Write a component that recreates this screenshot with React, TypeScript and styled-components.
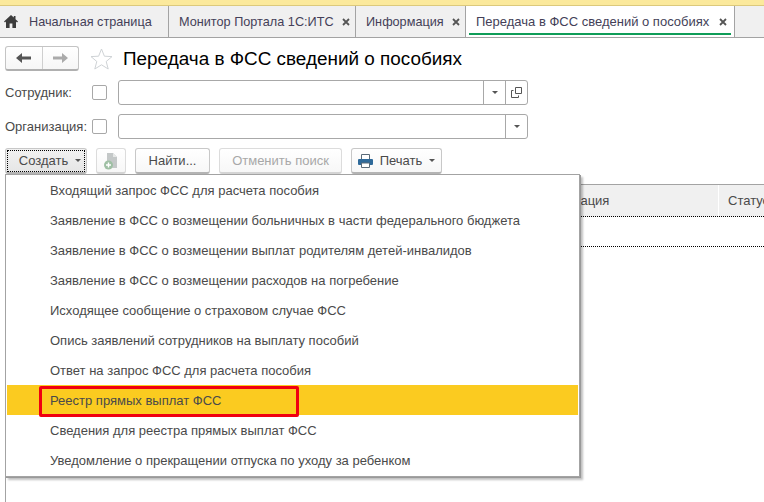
import React from 'react';
import styled, { createGlobalStyle } from 'styled-components';

const GlobalStyle = createGlobalStyle`
  html, body {
    margin: 0;
    padding: 0;
    background: #fff;
  }
  body {
    font-family: "Liberation Sans", Arial, sans-serif;
    font-size: 12px;
    color: #4a4a4a;
  }
`;

const Page = styled.div`
  width: 764px;
  height: 502px;
  display: flex;
  flex-direction: column;
  overflow: hidden;
`;

const TopStrip = styled.div`
  height: 5px;
  background: #fbe99c;
  border-bottom: 1px solid #dcc97c;
`;

const TabBar = styled.div`
  height: 31px;
  display: flex;
  background: #f0f0f0;
  border-bottom: 1px solid #a3a3a3;
`;

const Tab = styled.div<{ $width: number; $active?: boolean; $home?: boolean }>`
  position: relative;
  box-sizing: border-box;
  width: ${({ $width }) => $width}px;
  display: flex;
  align-items: center;
  gap: ${({ $home }) => ($home ? 11 : 8)}px;
  padding-left: ${({ $home }) => ($home ? 4 : 10)}px;
  border-right: 1px solid #a3a3a3;
  background: ${({ $active }) => ($active ? '#fff' : 'transparent')};
  color: #443f58;
  font-size: ${({ $active }) => ($active ? 13 : 12.7)}px;
  white-space: nowrap;

  ${({ $active }) =>
    $active &&
    `
    &::after {
      content: '';
      position: absolute;
      left: 3px;
      right: 3px;
      bottom: 2px;
      height: 2px;
      background: #0f9d58;
    }
  `}
`;

const Close = styled.span`
  margin-left: auto;
  margin-right: 7px;
  display: flex;
`;

const Content = styled.div`
  flex: 1;
  display: flex;
  flex-direction: column;
  padding: 8px 0 0 5px;
`;

const Header = styled.div`
  display: flex;
  align-items: center;
  height: 25px;
`;

const NavGroup = styled.div`
  box-sizing: border-box;
  width: 74px;
  height: 25px;
  display: flex;
  border: 1px solid #c4c4c4;
  border-bottom: 2px solid #b0b0b0;
  border-radius: 3px;
  background: linear-gradient(#fff, #f6f6f6);
`;

const NavButton = styled.div<{ $divided?: boolean }>`
  flex: 1;
  display: flex;
  align-items: center;
  justify-content: center;
  border-right: ${({ $divided }) => ($divided ? '1px solid #cfcfcf' : 'none')};
`;

const StarWrap = styled.div`
  margin-left: 11px;
  display: flex;
`;

const Title = styled.h1`
  margin: 0 0 0 10px;
  font-size: 18.9px;
  font-weight: 400;
  color: #000;
`;

const FieldRow = styled.div`
  display: flex;
  align-items: center;
  height: 25px;
  margin-top: 9px;
`;

const FieldLabel = styled.label`
  width: 87px;
  font-size: 13px;
  color: #4a4a4a;
  white-space: nowrap;
`;

const Check = styled.span`
  box-sizing: border-box;
  width: 15px;
  height: 15px;
  border: 1px solid #a8a8a8;
  border-radius: 2px;
  background: #fff;
`;

const Field = styled.div`
  box-sizing: border-box;
  margin-left: 11px;
  width: 410px;
  height: 25px;
  display: flex;
  justify-content: flex-end;
  border: 1px solid #a8a8a8;
  border-radius: 3px;
`;

const FieldButton = styled.div`
  width: 21px;
  display: flex;
  align-items: center;
  justify-content: center;
  border-left: 1px solid #a8a8a8;
`;

const Caret = styled.span<{ $color?: string }>`
  width: 0;
  height: 0;
  border-left: 3px solid transparent;
  border-right: 3px solid transparent;
  border-top: 3px solid ${({ $color }) => $color ?? '#555'};
`;

const Toolbar = styled.div`
  display: flex;
  margin-top: 9px;
  gap: 9px;
  height: 26px;
`;

const ToolButton = styled.div<{ $width: number; $disabled?: boolean; $focused?: boolean }>`
  position: relative;
  box-sizing: border-box;
  width: ${({ $width }) => $width}px;
  height: 26px;
  display: flex;
  align-items: center;
  justify-content: center;
  gap: 7px;
  padding-left: ${({ $focused }) => ($focused ? 8 : 0)}px;
  border: 1px solid ${({ $disabled }) => ($disabled ? '#dcdcdc' : '#c8c8c8')};
  border-bottom: 2px solid ${({ $disabled }) => ($disabled ? '#d4d4d4' : '#b4b4b4')};
  border-radius: 3px;
  background: ${({ $focused }) => ($focused ? 'linear-gradient(#f1f1f1, #e6e6e6)' : 'linear-gradient(#fff, #f7f7f7)')};
  color: ${({ $disabled }) => ($disabled ? '#a8a8a8' : '#4a4a4a')};
  font-size: 13px;

  ${({ $focused }) =>
    $focused &&
    `
    &::after {
      content: '';
      position: absolute;
      inset: 1px 1px 0;
      border: 1px dotted #000;
    }
  `}
`;

const Body = styled.div`
  position: relative;
  flex: 1;
  display: flex;
  flex-direction: column;
  padding-top: 10px;
`;

const TableHead = styled.div`
  height: 31px;
  display: grid;
  grid-template-columns: 714px 1fr;
  background: #f0f0f0;
  border-top: 1px solid #a3a3a3;
  border-bottom: 1px dotted #000;
  font-size: 13px;
`;

const HeadCell = styled.div<{ $pad: number; $divided?: boolean }>`
  display: flex;
  align-items: center;
  padding-left: ${({ $pad }) => $pad}px;
  border-right: ${({ $divided }) => ($divided ? '1px solid #fff' : 'none')};
  white-space: nowrap;
  overflow: hidden;
`;

const TableRow = styled.div`
  height: 29px;
  border-bottom: 1px dotted #000;
`;

const TableRest = styled.div`
  flex: 1;
`;

const Menu = styled.ul`
  position: absolute;
  top: 0;
  left: 0;
  box-sizing: border-box;
  width: 575px;
  height: 303px;
  margin: 0;
  padding: 0 1px;
  list-style: none;
  background: #fff;
  border: 1px solid #a3a3a3;
  box-shadow: 1px 1px 0 #999, 3px 3px 2px rgba(0, 0, 0, 0.25);
`;

const MenuItem = styled.li<{ $active?: boolean }>`
  position: relative;
  box-sizing: border-box;
  height: 30px;
  display: flex;
  align-items: center;
  padding: 1px 0 0 43px;
  background: ${({ $active }) => ($active ? '#fbcb20' : 'transparent')};
  color: #4a4a4a;
  font-size: 13px;
  white-space: nowrap;
`;

const Callout = styled.span`
  position: absolute;
  left: 32px;
  top: 1px;
  width: 260px;
  height: 31px;
  box-sizing: border-box;
  border: 3px solid #f00010;
  border-radius: 2px;
`;

const LeftEdge = styled.div`
  position: absolute;
  left: 0;
  top: 0;
  bottom: 0;
  width: 1px;
  background: #a3a3a3;
`;

const HomeIcon = () => (
  <svg width="14" height="13" viewBox="0 0 14 13">
    <path d="M7 0 0 6.5 1 7.5 2 6.6V13h3.6V8.5h2.8V13H12V6.6L13 7.5 14 6.5 11.5 4.2V1H9.8v1.6Z" fill="#3c3c3c" />
  </svg>
);

const CloseIcon = () => (
  <svg width="8" height="8" viewBox="0 0 8 8">
    <path d="M1 1 7 7M7 1 1 7" stroke="#555" strokeWidth="1.8" />
  </svg>
);

const ArrowIcon = ({ dir, color }: { dir: 'left' | 'right'; color: string }) => (
  <svg width="15" height="10" viewBox="0 0 15 10">
    <path d={dir === 'left' ? 'M0 5 6 0V3.5H15V6.5H6V10Z' : 'M15 5 9 0V3.5H0V6.5H9V10Z'} fill={color} />
  </svg>
);

const StarIcon = () => (
  <svg width="23" height="22" viewBox="0 0 23 22">
    <path d="M11.5 1 14.4 8.2 22 8.6 16.2 13.5 18.2 21 11.5 16.8 4.8 21 6.8 13.5 1 8.6 8.6 8.2Z" fill="#fff" stroke="#cfd3d6" />
  </svg>
);

const WindowIcon = () => (
  <svg width="13" height="13" viewBox="0 0 13 13">
    <path d="M5.5 1.5h6v6h-6ZM3.5 4.5h-2v7h7v-2" fill="none" stroke="#555" />
  </svg>
);

const DocPlusIcon = () => (
  <svg width="14" height="18" viewBox="0 0 14 18">
    <path d="M3 1h6l4 4v11H3Z" fill="#c4c8c8" />
    <path d="M9 1v4h4" fill="#e6e8e7" />
    <circle cx="4.5" cy="13" r="4.5" fill="#9fc0a4" />
    <path d="M4.5 10.5v5M2 13h5" stroke="#fff" strokeWidth="1.4" />
  </svg>
);

const PrinterIcon = () => (
  <svg width="15" height="14" viewBox="0 0 15 14">
    <path d="M3.5 5V.5h8V5" fill="#fff" stroke="#5a6a78" />
    <rect x="0" y="5" width="15" height="6" rx="1" fill="#2f6a9a" />
    <path d="M3.5 9h8v4.5h-8Z" fill="#fff" stroke="#5a6a78" />
  </svg>
);

const menuItems = [
  'Входящий запрос ФСС для расчета пособия',
  'Заявление в ФСС о возмещении больничных в части федерального бюджета',
  'Заявление в ФСС о возмещении выплат родителям детей-инвалидов',
  'Заявление в ФСС о возмещении расходов на погребение',
  'Исходящее сообщение о страховом случае ФСС',
  'Опись заявлений сотрудников на выплату пособий',
  'Ответ на запрос ФСС для расчета пособия',
  'Реестр прямых выплат ФСС',
  'Сведения для реестра прямых выплат ФСС',
  'Уведомление о прекращении отпуска по уходу за ребенком',
];

const App: React.FC = () => (
  <Page>
    <GlobalStyle />
    <TopStrip />
    <TabBar>
      <Tab $width={169} $home>
        <HomeIcon />
        Начальная страница
      </Tab>
      <Tab $width={187}>
        Монитор Портала 1С:ИТС
        <Close><CloseIcon /></Close>
      </Tab>
      <Tab $width={110}>
        Информация
        <Close><CloseIcon /></Close>
      </Tab>
      <Tab $width={269} $active>
        Передача в ФСС сведений о пособиях
        <Close><CloseIcon /></Close>
      </Tab>
    </TabBar>
    <Content>
      <Header>
        <NavGroup>
          <NavButton $divided><ArrowIcon dir="left" color="#555" /></NavButton>
          <NavButton><ArrowIcon dir="right" color="#aaa" /></NavButton>
        </NavGroup>
        <StarWrap><StarIcon /></StarWrap>
        <Title>Передача в ФСС сведений о пособиях</Title>
      </Header>
      <FieldRow>
        <FieldLabel>Сотрудник:</FieldLabel>
        <Check />
        <Field>
          <FieldButton><Caret /></FieldButton>
          <FieldButton><WindowIcon /></FieldButton>
        </Field>
      </FieldRow>
      <FieldRow>
        <FieldLabel>Организация:</FieldLabel>
        <Check />
        <Field>
          <FieldButton><Caret /></FieldButton>
        </Field>
      </FieldRow>
      <Toolbar>
        <ToolButton $width={82} $focused>
          Создать
          <Caret />
        </ToolButton>
        <ToolButton $width={30} $disabled><DocPlusIcon /></ToolButton>
        <ToolButton $width={75}>Найти...</ToolButton>
        <ToolButton $width={123} $disabled>Отменить поиск</ToolButton>
        <ToolButton $width={91}>
          <PrinterIcon />
          Печать
          <Caret />
        </ToolButton>
      </Toolbar>
      <Body>
        <LeftEdge />
        <TableHead>
          <HeadCell $pad={526} $divided>Организация</HeadCell>
          <HeadCell $pad={9}>Статус</HeadCell>
        </TableHead>
        <TableRow />
        <TableRest />
        <Menu>
          {menuItems.map((item) => {
            const active = item === 'Реестр прямых выплат ФСС';
            return (
              <MenuItem key={item} $active={active}>
                {item}
                {active && <Callout />}
              </MenuItem>
            );
          })}
        </Menu>
      </Body>
    </Content>
  </Page>
);

export default App;
